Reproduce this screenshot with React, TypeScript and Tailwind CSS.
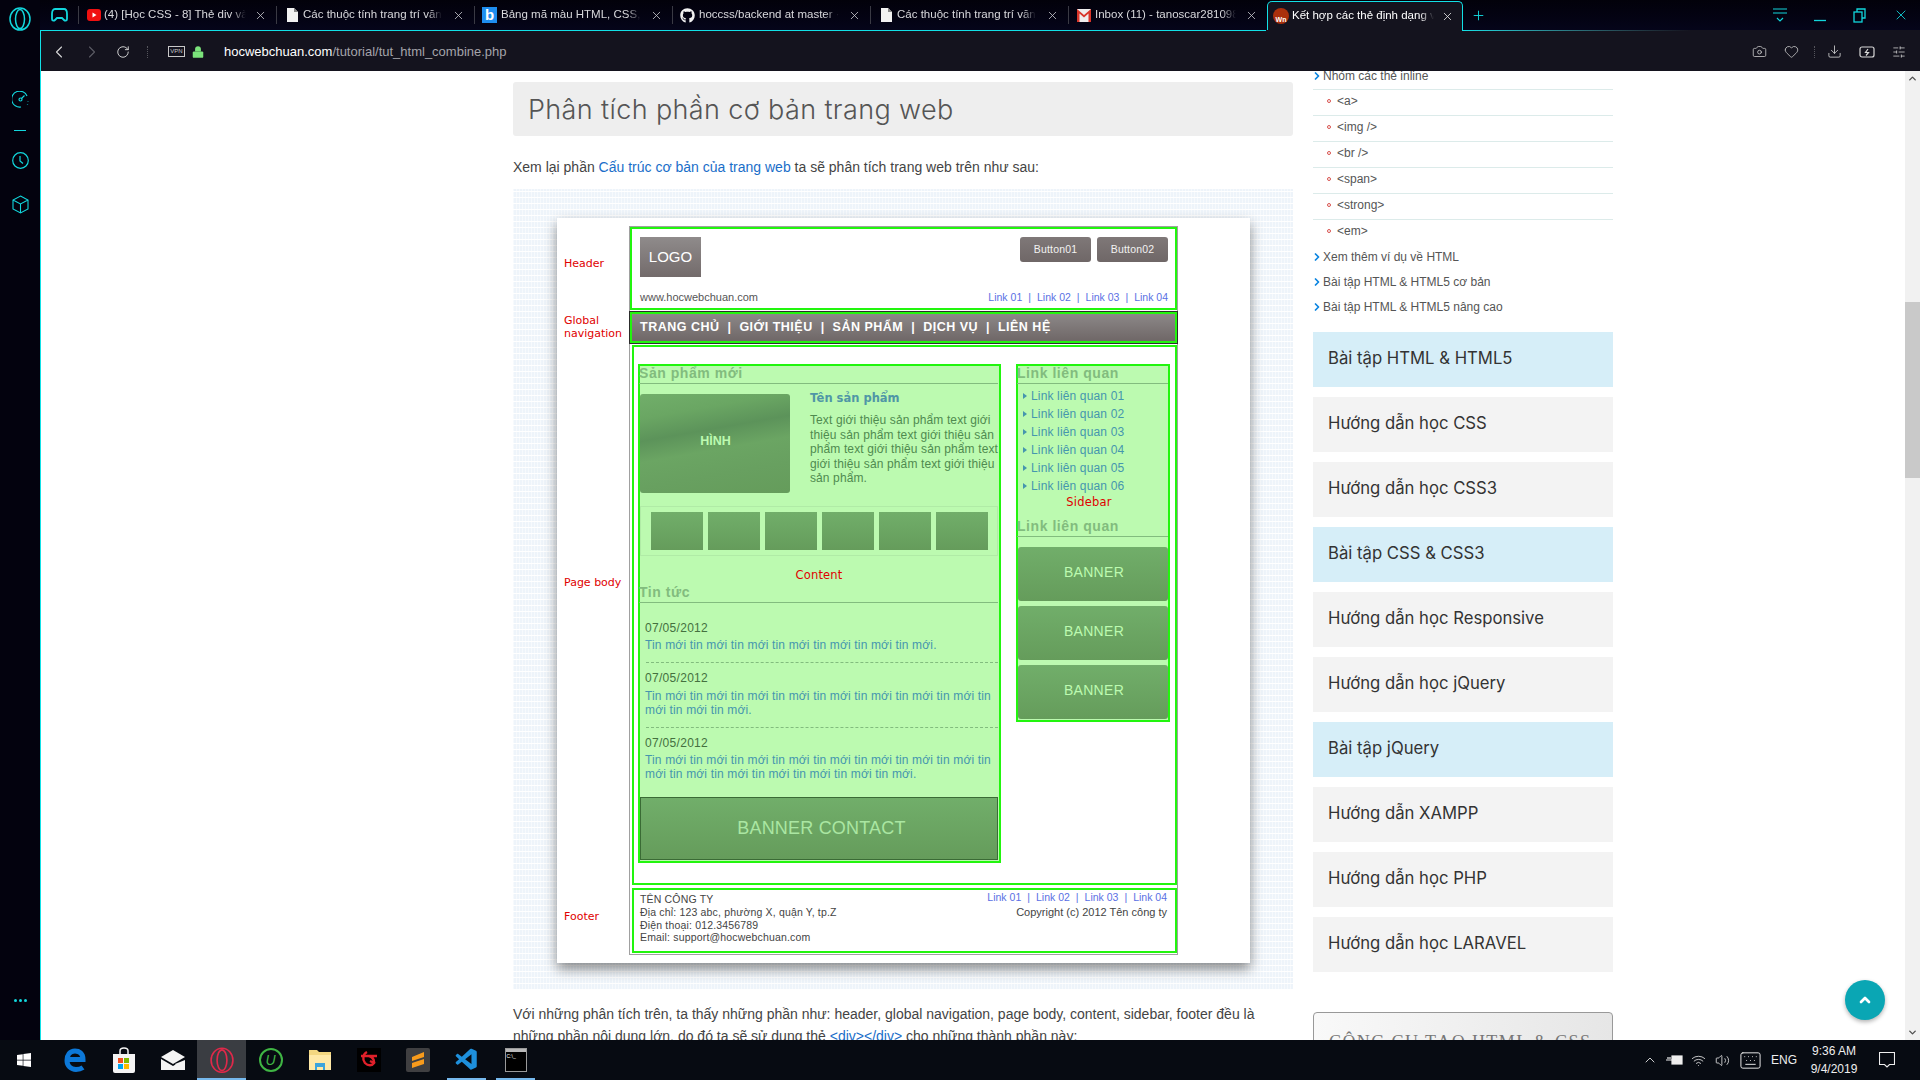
import React from "react";
import { FaGithub, FaWindows } from "react-icons/fa";
import { VscVscode } from "react-icons/vsc";
import { X, Plus, ChevronLeft, ChevronRight, RotateCw, Lock, Camera, Heart, Download, SlidersHorizontal, ChevronUp, ChevronDown, Volume2, Wifi, Keyboard, ChevronRight as Chev } from "lucide-react";

const arial = "font-['Liberation_Sans',Arial,sans-serif]";
const dv = "font-['DejaVu_Sans',Verdana,sans-serif]";

function OperaLogo({ size = 22, color = "#12d6dc" }: { size?: number; color?: string }) {
  return (
    <svg width={size} height={size * 1.1} viewBox="0 0 22 24" fill="none" stroke={color} strokeWidth="1.5">
      <ellipse cx="11" cy="12" rx="10" ry="11" />
      <ellipse cx="11" cy="12" rx="4.5" ry="9.5" />
    </svg>
  );
}

function DocIcon() {
  return (
    <svg width="11" height="14" viewBox="0 0 11 14" fill="#f2f2f2">
      <path d="M0 0h7l4 4v10H0z" />
      <path d="M7 0v4h4" fill="#888" />
    </svg>
  );
}

function YoutubeIcon() {
  return (
    <svg width="14" height="14" viewBox="0 0 14 14">
      <rect x="0" y="1" width="14" height="12" rx="3" fill="#f01010" />
      <path d="M5.5 4.5l4 2.5-4 2.5z" fill="#fff" />
    </svg>
  );
}

function BlueB() {
  return <div className={`w-[15px] h-[16px] bg-[#1e8ef0] text-white text-[15px] leading-[15px] font-bold text-center ${arial}`}>b</div>;
}

function GmailIcon() {
  return (
    <svg width="14" height="13" viewBox="0 0 14 13">
      <rect width="14" height="13" fill="#eee" />
      <path d="M0 0l7 6 7-6v13h-2.500V4.500L7 8.500 2.500 4.500V13H0z" fill="#d8352a" />
    </svg>
  );
}

function WIcon() {
  return (
    <div className="w-[16px] h-[16px] rounded-full bg-[#a9300c] flex items-end justify-center">
      <span className={`text-[7px] leading-[9px] font-bold text-white ${arial}`}>Wn</span>
    </div>
  );
}

const tabs = [
  { w: "w-[198px]", icon: <YoutubeIcon />, gap: "gap-[3px]", text: "(4) [Học CSS - 8] Thẻ div và thẻ span", pl: "pl-[8px]" },
  { w: "w-[198px]", icon: <DocIcon />, gap: "gap-[5px]", text: "Các thuộc tính trang trí văn bản", pl: "pl-[10px]" },
  { w: "w-[198px]", icon: <BlueB />, gap: "gap-[4px]", text: "Bảng mã màu HTML, CSS, RGB", pl: "pl-[7px]" },
  { w: "w-[198px]", icon: <FaGithub size={15} color="#f2f2f2" />, gap: "gap-[4px]", text: "hoccss/backend at master · hoccss", pl: "pl-[7px]" },
  { w: "w-[198px]", icon: <DocIcon />, gap: "gap-[5px]", text: "Các thuộc tính trang trí văn bản", pl: "pl-[10px]" },
  { w: "w-[199px]", icon: <GmailIcon />, gap: "gap-[4px]", text: "Inbox (11) - tanoscar281098@gmail", pl: "pl-[8px]" },
];

function Tab({ t }: { t: (typeof tabs)[number] }) {
  return (
    <div className={`${t.w} ${t.pl} ${t.gap} h-[18px] flex items-center border-l border-[#3a3a44] pr-[9px]`}>
      <span className="shrink-0 flex items-center">{t.icon}</span>
      <span className={`flex-1 min-w-0 overflow-hidden whitespace-nowrap text-[11.500px] text-[#d8d8dc] [mask-image:linear-gradient(to_right,black_90%,transparent)] ${arial}`}>{t.text}</span>
      <X size={13} strokeWidth={1.5} className="shrink-0 ml-[5px] text-[#c8c8cc]" />
    </div>
  );
}

function TabBar() {
  return (
    <div className="h-[30px] flex items-center bg-gradient-to-b from-[#02010a] to-[#05051a]">
      <div className="w-[38px] flex justify-center">
        <svg width="17" height="14" viewBox="0 0 17 14" fill="none" stroke="#12d6dc" strokeWidth="1.8">
          <path d="M4 1h9c2 0 3 2 3 5l0 5c0 2-2 2-3 1l-2-2H6l-2 2c-1 1-3 1-3-1l0-5c0-3 1-5 3-5z" />
        </svg>
      </div>
      {tabs.map((t, i) => (
        <Tab t={t} key={i} />
      ))}
      <div className="w-[196px] h-[30px] mt-[1px] flex items-center bg-[#14131e] border border-b-0 border-[#12e0e6] rounded-t-[5px] pl-[5px] pr-[8px] gap-[3px]">
        <WIcon />
        <span className={`flex-1 min-w-0 overflow-hidden whitespace-nowrap text-[11.500px] text-white [mask-image:linear-gradient(to_right,black_90%,transparent)] ${arial}`}>Kết hợp các thẻ định dạng và</span>
        <X size={13} strokeWidth={1.5} className="shrink-0 ml-[4px] text-[#e8e8e8]" />
      </div>
      <Plus size={15} strokeWidth={1.5} className="ml-[8px] text-[#12d6dc]" />
      <div className="flex-1" />
      <div className="flex items-center text-[#12d6dc] pr-[11px]">
        <svg width="16" height="16" viewBox="0 0 16 16" fill="none" stroke="currentColor" strokeWidth="1.2" className="mr-[25px]">
          <path d="M1 2h14M1 6h14M5 11l3 3 3-3" />
        </svg>
        <svg width="14" height="14" viewBox="0 0 14 14" fill="none" stroke="currentColor" strokeWidth="1.3" className="mr-[26px]">
          <path d="M1 12.500h12" />
        </svg>
        <svg width="14" height="15" viewBox="0 0 14 15" fill="none" stroke="currentColor" strokeWidth="1.3" className="mr-[26px]">
          <rect x="1" y="4" width="8" height="10" />
          <path d="M4 4V1h8v9H9" />
        </svg>
        <X size={16} strokeWidth={1.3} />
      </div>
    </div>
  );
}

function Toolbar() {
  return (
    <div className="h-[40px] bg-[#14131e] flex items-center shrink-0 pt-[1px]">
      <ChevronLeft size={20} strokeWidth={1.3} className="ml-[8px] text-[#d8d8d8]" />
      <ChevronRight size={20} strokeWidth={1.3} className="ml-[13px] text-[#5c5c64]" />
      <RotateCw size={14} strokeWidth={1.6} className="ml-[14px] text-[#d8d8d8]" />
      <div className="ml-[17px] w-px h-[12px] border-l border-dotted border-[#55555c]" />
      <div className={`ml-[20px] w-[17px] h-[11px] border border-[#c8c8c8] text-[6px] leading-[9px] text-center text-[#c8c8c8] ${arial}`}>VPN</div>
      <Lock size={14} strokeWidth={0} className="ml-[6px] text-[#7be37b] fill-[#7be37b]" />
      <div className={`ml-[19px] text-[13px] ${arial}`}>
        <span className="text-white">hocwebchuan.com</span>
        <span className="text-[#a4a4aa]">/tutorial/tut_html_combine.php</span>
      </div>
      <div className="flex-1" />
      <div className="flex items-center text-[#d8d8d8] pr-[14px]">
        <Camera size={15} strokeWidth={1.2} className="mr-[17px]" />
        <Heart size={15} strokeWidth={1.2} className="mr-[15px]" />
        <div className="w-px h-[12px] border-l border-dotted border-[#55555c] mr-[12px]" />
        <Download size={15} strokeWidth={1.3} className="mr-[17px]" />
        <svg width="16" height="12" viewBox="0 0 16 12" fill="none" stroke="currentColor" strokeWidth="1.2" className="mr-[17px]">
          <rect x="1" y="1" width="14" height="10" rx="2" />
          <path d="M9 3L6.500 6.500h3L7 9.500" />
        </svg>
        <SlidersHorizontal size={14} strokeWidth={1.3} />
      </div>
    </div>
  );
}

function LeftRail() {
  return (
    <div className="w-[40px] shrink-0 flex flex-col items-center text-[#12d6dc] bg-[#03020e]">
      <div className="mt-[7px]">
        <OperaLogo />
      </div>
      <svg width="17" height="17" viewBox="0 0 17 17" fill="none" stroke="currentColor" strokeWidth="1.2" className="mt-[60px]">
        <path d="M15 5A8 8 0 1 0 9 16" />
        <circle cx="8.500" cy="8.500" r="1.500" />
        <path d="M9.500 7.500L12.500 4.500M16 10v.5M15.500 13v.5" />
      </svg>
      <div className="w-[12px] h-px bg-current mt-[22px]" />
      <svg width="17" height="17" viewBox="0 0 17 17" fill="none" stroke="currentColor" strokeWidth="1.2" className="mt-[21px]">
        <circle cx="8.500" cy="8.500" r="7.800" />
        <path d="M8 4v5l3 2.500" />
      </svg>
      <svg width="17" height="19" viewBox="0 0 17 19" fill="none" stroke="currentColor" strokeWidth="1.1" className="mt-[26px]">
        <path d="M8.500 1L16 5v9l-7.500 4L1 14V5zM1 5l7.500 4L16 5M8.500 9v9" />
      </svg>
      <div className="flex-1" />
      <div className="flex gap-[2px] mb-[38px]">
        <i className="w-[3px] h-[3px] rounded-full bg-current" />
        <i className="w-[3px] h-[3px] rounded-full bg-current" />
        <i className="w-[3px] h-[3px] rounded-full bg-current" />
      </div>
    </div>
  );
}

function SectionTitle({ text }: { text: string }) {
  return (
    <div className={`h-[18px] -ml-px text-[14px] leading-[14px] font-bold text-[#82bc7e] tracking-[0.55px] border-b border-[#82bc7e] ${arial}`}>{text}</div>
  );
}

function HeaderLinks() {
  const items = ["Link 01", "Link 02", "Link 03", "Link 04"];
  return (
    <div className={`flex gap-[6px] text-[10.500px] leading-[13px] text-[#5a70e4] whitespace-nowrap ${arial}`}>
      {items.map((l, i) => (
        <React.Fragment key={l}>
          {i > 0 && <span>|</span>}
          <span>{l}</span>
        </React.Fragment>
      ))}
    </div>
  );
}

const greenBtn = "bg-gradient-to-b from-[#71ae6a] to-[#659c5b]";

function Thumbs() {
  return (
    <div className="mt-[13px] h-[50px] border border-[#b0eba6] flex items-center justify-center gap-[5px]">
      {[0, 1, 2, 3, 4, 5].map((i) => (
        <div key={i} className={`w-[52px] h-[38px] ${greenBtn}`} />
      ))}
    </div>
  );
}

function News({ lines, mt, linkMt }: { lines: string[]; mt: string; linkMt: string }) {
  return (
    <div className={`${mt} pl-[5px] ${arial}`}>
      <div className="text-[12px] leading-[15px] text-[#44703f] tracking-[0.3px]">07/05/2012</div>
      <div className={`${linkMt} text-[12px] leading-[14px] text-[#4596ae] tracking-[0.16px] whitespace-nowrap`}>
        {lines.map((l, i) => (
          <div key={i}>{l}</div>
        ))}
      </div>
    </div>
  );
}

function Wireframe() {
  return (
    <div className="mt-[12px] w-[780px] h-[801px] pt-[29px] pl-[44px] bg-[repeating-linear-gradient(90deg,#ffffff80_0px,#ffffff80_1px,transparent_1px,transparent_3px),repeating-linear-gradient(0deg,#ffffff_0px,#ffffff_1px,#eef4fa_1px,#eef4fa_6px)]">
      <div className="w-[693px] h-[745px] bg-white shadow-[0_6px_12px_rgba(0,0,0,0.45)] flex pt-[8px]">
        <div className={`w-[72px] shrink-0 pl-[7px] text-[11px] leading-[13.500px] text-[#e00000] ${dv}`}>
          <div className="mt-[31px]">Header</div>
          <div className="mt-[43px]">
            Global
            <br />
            navigation
          </div>
          <div className="mt-[235px]">Page body</div>
          <div className="mt-[321px]">Footer</div>
        </div>
        <div className="w-[549px] h-[729px] border border-[#a0a0a0] flex flex-col">
          {/* header */}
          <div className="h-[83px] border-2 border-[#22f50e] flex flex-col pl-[8px] pr-[7px] pt-[8px]">
            <div className="flex items-start justify-between">
              <div className={`w-[61px] h-[40px] bg-gradient-to-b from-[#8f8b8b] to-[#736b6b] flex items-center justify-center text-white text-[15px] ${arial}`}>LOGO</div>
              <div className={`flex gap-[6px] text-[10.500px] text-[#f2f2f2] tracking-[0.2px] ${arial}`}>
                <div className="w-[71px] h-[25px] rounded-[3px] bg-gradient-to-b from-[#7f7878] to-[#6f6767] flex items-center justify-center">Button01</div>
                <div className="w-[71px] h-[25px] rounded-[3px] bg-gradient-to-b from-[#7f7878] to-[#6f6767] flex items-center justify-center">Button02</div>
              </div>
            </div>
            <div className="mt-[14px] flex items-center justify-between">
              <div className={`text-[11px] leading-[13px] text-[#555] ${arial}`}>www.hocwebchuan.com</div>
              <HeaderLinks />
            </div>
          </div>
          {/* nav */}
          <div className="-mx-px h-[33px] mt-[1px] border border-[#2c2c2c]">
            <div className={`h-full border-2 border-[#22f50e] bg-gradient-to-b from-[#8c8888] to-[#6f6767] pl-[8px] flex items-center text-[12.500px] font-bold text-white tracking-[0.5px] whitespace-pre ${arial}`}>
              TRANG CHỦ  |  GIỚI THIỆU  |  SẢN PHẨM  |  DỊCH VỤ  |  LIÊN HỆ
            </div>
          </div>
          {/* body */}
          <div className="ml-[2px] h-[540px] mt-[1px] border-2 border-[#22f50e] pl-[4px] pt-[17px] flex items-start gap-[15px]">
            <div className="w-[363px] h-[499px] border-2 border-[#22f50e] bg-[#bcfab0] pr-[1px]">
              <SectionTitle text="Sản phẩm mới" />
              <div className="flex mt-[10px]">
                <div className="w-[150px] h-[99px] rounded-[3px] bg-[linear-gradient(170deg,#71ae6a_0%,#6aa663_20%,#5c935a_38%,#6ba563_55%,#68a060_75%,#659c5b_100%)] flex items-center justify-center pb-[5px] pl-[1px]">
                  <span className={`text-[12.500px] font-bold text-[#bcfab0] ${arial}`}>HÌNH</span>
                </div>
                <div className="ml-[20px]">
                  <div className={`text-[11.500px] leading-[9px] font-bold text-[#4f96a6] ${dv}`}>Tên sản phẩm</div>
                  <div className={`mt-[10px] text-[12px] leading-[14.500px] text-[#4f8a4f] tracking-[0.12px] whitespace-nowrap ${arial}`}>
                    Text giới thiệu sản phẩm text giới
                    <br />
                    thiệu sản phẩm text giới thiệu sản
                    <br />
                    phẩm text giới thiệu sản phẩm text
                    <br />
                    giới thiệu sản phẩm text giới thiệu
                    <br />
                    sản phẩm.
                  </div>
                </div>
              </div>
              <Thumbs />
              <div className={`mt-[12px] text-center text-[11.500px] leading-[14px] text-[#e00000] tracking-[0.2px] ${dv}`}>Content</div>
              <div className="mt-[3px]">
                <SectionTitle text="Tin tức" />
              </div>
              <News mt="mt-[18px]" linkMt="mt-[2px]" lines={["Tin mới tin mới tin mới tin mới tin mới tin mới tin mới."]} />
              <div className="ml-[6px] mt-[10px] border-t border-dashed border-[#82bc7e]" />
              <News mt="mt-[8px]" linkMt="mt-[3px]" lines={["Tin mới tin mới tin mới tin mới tin mới tin mới tin mới tin mới tin", "mới tin mới tin mới."]} />
              <div className="ml-[6px] mt-[10px] border-t border-dashed border-[#82bc7e]" />
              <News mt="mt-[8px]" linkMt="mt-[2px]" lines={["Tin mới tin mới tin mới tin mới tin mới tin mới tin mới tin mới tin", "mới tin mới tin mới tin mới tin mới tin mới tin mới."]} />
              <div className={`mt-[16px] h-[63px] border border-[#3a6b35] ${greenBtn} flex items-center justify-center pl-[5px] text-[18px] text-[#aae6a2] tracking-[0.2px] ${arial}`}>BANNER CONTACT</div>
            </div>
            <div className="w-[154px] h-[358px] border-2 border-[#22f50e] bg-[#bcfab0] flex flex-col">
              <SectionTitle text="Link liên quan" />
              <div className={`mt-[3px] ${arial}`}>
                {["01", "02", "03", "04", "05", "06"].map((n) => (
                  <div key={n} className="h-[18px] flex items-center pl-[5px] gap-[4px] text-[12px] text-[#4596ae] tracking-[0.15px]">
                    <span className="w-0 h-0 border-y-[3px] border-y-transparent border-l-[4px] border-l-[#4596ae]" />
                    Link liên quan {n}
                  </div>
                ))}
              </div>
              <div className={`text-center pr-[8px] text-[11.500px] leading-[14px] text-[#e00000] tracking-[0.2px] ${dv}`}>Sidebar</div>
              <div className="mt-[10px]">
                <SectionTitle text="Link liên quan" />
              </div>
              <div className={`mt-[10px] flex flex-col gap-[5px] text-[14px] text-[#bcfab0] tracking-[0.3px] ${arial}`}>
                {[0, 1, 2].map((i) => (
                  <div key={i} className={`h-[54px] rounded-[3px] ${greenBtn} flex items-center justify-center pl-[2px] pb-[3px]`}>BANNER</div>
                ))}
              </div>
            </div>
          </div>
          {/* footer */}
          <div className="ml-[2px] h-[65px] mt-[3px] border-2 border-[#22f50e] pl-[6px] pr-[8px] flex justify-between">
            <div className={`pt-[3px] text-[10.500px] leading-[12.800px] text-[#444] tracking-[0.17px] ${arial}`}>
              <div>TÊN CÔNG TY</div>
              <div>Địa chỉ: 123 abc, phường X, quận Y, tp.Z</div>
              <div>Điện thoại: 012.3456789</div>
              <div>Email: support@hocwebchuan.com</div>
            </div>
            <div className={`flex flex-col items-end pt-[1px] ${arial}`}>
              <HeaderLinks />
              <div className="mt-[1px] text-[11px] leading-[14px] text-[#444]">Copyright (c) 2012 Tên công ty</div>
            </div>
          </div>
        </div>
      </div>
    </div>
  );
}

const menuItems = ["<a>", "<img />", "<br />", "<span>", "<strong>", "<em>"];
const cards: [string, boolean][] = [
  ["Bài tập HTML & HTML5", true],
  ["Hướng dẫn học CSS", false],
  ["Hướng dẫn học CSS3", false],
  ["Bài tập CSS & CSS3", true],
  ["Hướng dẫn học Responsive", false],
  ["Hướng dẫn học jQuery", false],
  ["Bài tập jQuery", true],
  ["Hướng dẫn XAMPP", false],
  ["Hướng dẫn học PHP", false],
  ["Hướng dẫn học LARAVEL", false],
];

function MainLink({ text }: { text: string }) {
  return (
    <div className={`h-[25px] flex items-center text-[12px] text-[#555] ${arial}`}>
      <Chev size={12} strokeWidth={3.5} className="text-[#0a84e0] -ml-[2px] mr-[0px]" />
      {text}
    </div>
  );
}

function RightCol() {
  return (
    <div className="w-[300px] ml-[20px] -mt-[8px] shrink-0">
      <div className={`h-[27px] flex items-center text-[12px] text-[#555] border-b border-[#dcebea] ${arial}`}>
        <Chev size={12} strokeWidth={3.5} className="text-[#0a84e0] -ml-[2px] mr-[0px]" />
        Nhóm các thẻ inline
      </div>
      {menuItems.map((m, i) => (
        <div key={m} className={`h-[26px] pb-[4px] flex items-center pl-[14px] text-[12px] text-[#555] ${i < 5 ? "border-b border-[#dcebea]" : ""} ${arial}`}>
          <span className="w-[4px] h-[4px] rounded-full border border-[#d9534f] mr-[6px]" />
          {m}
        </div>
      ))}
      <div className="-mt-[2px]">
        <MainLink text="Xem thêm ví dụ về HTML" />
        <MainLink text="Bài tập HTML & HTML5 cơ bản" />
        <MainLink text="Bài tập HTML & HTML5 nâng cao" />
      </div>
      <div className="mt-[12.500px] flex flex-col gap-[10px]">
        {cards.map(([t, blue]) => (
          <div key={t} className={`h-[55px] flex items-center pl-[15px] text-[16.700px] text-[#333] font-['Inter',sans-serif] ${blue ? "bg-[#d6eef8]" : "bg-[#f3f3f3]"}`}>
            {t}
          </div>
        ))}
      </div>
      <div className="mt-[40px] h-[60px] border border-[#999] rounded-t-[4px] bg-gradient-to-r from-[#f9f9f9] to-[#e6e6e6] pt-[20px] pl-[15px] font-['Liberation_Serif',serif] text-[18px] leading-[18px] tracking-[1.4px] text-[#777]">CÔNG CỤ TẠO HTML &amp; CSS</div>
    </div>
  );
}

function Content() {
  return (
    <div className="flex-1 min-h-0 flex bg-white relative overflow-hidden">
      <div className="flex-1 min-w-0 flex items-start pl-[472px]">
        <div className="w-[780px] shrink-0 pt-[11px]">
          <div className="h-[54px] bg-[#eeeeee] rounded-[3px] flex items-center pl-[15px] pt-[3px] text-[27px] text-[#555] tracking-[0.38px] font-['Inter',sans-serif] font-light">Phân tích phần cơ bản trang web</div>
          <p className={`mt-[21px] text-[14px] leading-[20px] text-[#444] ${arial}`}>
            Xem lại phần <span className="text-[#1a6ec9]">Cấu trúc cơ bản của trang web</span> ta sẽ phân tích trang web trên như sau:
          </p>
          <Wireframe />
          <p className={`mt-[13px] text-[14px] leading-[22px] text-[#444] ${arial}`}>
            Với những phân tích trên, ta thấy những phần như: header, global navigation, page body, content, sidebar, footer đều là những phần nội dung lớn, do đó ta sẽ sử dụng thẻ <span className="text-[#1a6ec9] underline">&lt;div&gt;&lt;/div&gt;</span> cho những thành phần này:
          </p>
        </div>
        <RightCol />
      </div>
      <div className="w-[15px] shrink-0 bg-[#f1f1f1] flex flex-col items-center">
        <ChevronUp size={11} strokeWidth={3} className="mt-[2px] text-[#505050]" />
        <div className="w-full h-[176px] bg-[#c9c9c9] mt-[218px]" />
        <div className="flex-1" />
        <ChevronDown size={11} strokeWidth={3} className="mb-[2px] text-[#505050]" />
      </div>
      <div className="absolute left-[1804px] top-[909px] w-[40px] h-[40px] rounded-full bg-[#0aa6b4] shadow-[0_2px_4px_rgba(0,0,0,0.3)] flex items-center justify-center">
        <ChevronUp size={16} strokeWidth={4} className="text-white" />
      </div>
    </div>
  );
}

function TaskIcon({ children, active, run }: { children: React.ReactNode; active?: boolean; run?: boolean }) {
  return (
    <div className={`w-[49px] h-[40px] flex items-center justify-center relative ${active ? "bg-[#3a3d42]" : ""}`}>
      {children}
      {(active || run) && <div className={`absolute bottom-0 h-[2px] bg-[#76b9ed] ${active ? "inset-x-0" : "inset-x-[5px]"}`} />}
    </div>
  );
}

function Taskbar() {
  return (
    <div className="h-[40px] shrink-0 bg-[#070b12] flex items-center text-white">
      <div className="w-[50px] flex justify-center pr-[3px]">
        <FaWindows size={16} />
      </div>
      <TaskIcon>
        <svg width="22" height="24" viewBox="0 0 22 24" fill="none" stroke="#0c78d8" strokeWidth="5">
          <path d="M3 11.500h16C19 5 15 3 11 3 6 3 3 7 3 12.500 3 18 7 21.500 12 21.500c3 0 5-.6 7-2" />
        </svg>
      </TaskIcon>
      <TaskIcon>
        <svg width="24" height="26" viewBox="0 0 24 26">
          <path d="M1 7h22v17a2 2 0 0 1-2 2H3a2 2 0 0 1-2-2z" fill="#f4f4f4" />
          <path d="M8 8V4c0-4 8-4 8 0v4" fill="none" stroke="#f4f4f4" strokeWidth="1.5" />
          <rect x="6" y="11" width="5" height="5" fill="#f25022" />
          <rect x="12" y="11" width="5" height="5" fill="#7fba00" />
          <rect x="6" y="17" width="5" height="5" fill="#00a4ef" />
          <rect x="12" y="17" width="5" height="5" fill="#ffb900" />
        </svg>
      </TaskIcon>
      <TaskIcon>
        <svg width="24" height="20" viewBox="0 0 24 20">
          <path d="M0 7L12 0l12 7-12 7z" fill="#f4f4f4" />
          <path d="M0 9l12 7 5-3 2 5-5-4 10-4v10H0z" fill="#f4f4f4" />
        </svg>
      </TaskIcon>
      <TaskIcon active>
        <OperaLogo size={24} color="#e0294a" />
      </TaskIcon>
      <TaskIcon>
        <div className="w-[24px] h-[24px] rounded-full border-2 border-[#3fb544] flex items-center justify-center text-[#3fb544] text-[14px] italic leading-none font-['Liberation_Sans',sans-serif]">U</div>
      </TaskIcon>
      <TaskIcon>
        <svg width="22" height="22" viewBox="0 0 22 22">
          <path d="M0 1h8l2 2h12v18H0z" fill="#f3d780" />
          <path d="M0 6h22v15H0z" fill="#ffe9a6" />
          <path d="M6 14h10v7h-2v-3H8v3H6z" fill="#3da5dc" />
        </svg>
      </TaskIcon>
      <TaskIcon>
        <div className="w-[24px] h-[24px] bg-black flex items-center justify-center">
          <svg width="20" height="20" viewBox="0 0 20 20" fill="none" stroke="#e0202a" strokeWidth="2.4">
            <path d="M8 2c-4 2-5 7-2 11 3 3 7 3 9 0l-4-2M2 6h16M10 6c3 1 5 3 5 6" />
          </svg>
        </div>
      </TaskIcon>
      <TaskIcon>
        <div className="w-[24px] h-[24px] rounded-[2px] bg-[#3f3f41] flex items-center justify-center">
          <svg width="14" height="18" viewBox="0 0 14 18" fill="#f89b1c">
            <path d="M13 1v5L1 10V6zM1 17v-5l12-4v5z" />
          </svg>
        </div>
      </TaskIcon>
      <TaskIcon run>
        <VscVscode size={26} color="#1e90dc" />
      </TaskIcon>
      <TaskIcon run>
        <div className="w-[22px] h-[24px] border border-[#9a9a9a] bg-black">
          <div className="h-[3px] bg-[#b8b8b8]" />
          <div className={`text-[5px] leading-[8px] pl-[1px] text-white ${arial}`}>C:\_</div>
        </div>
      </TaskIcon>
      <div className="flex-1" />
      <div className={`flex items-center pr-[13px] text-[12px] text-[#eeeeee] ${arial}`}>
        <div className="w-[24px] flex justify-center">
          <ChevronUp size={16} strokeWidth={1.3} />
        </div>
        <div className="w-[24px] flex justify-center">
          <svg width="17" height="12" viewBox="0 0 17 12" fill="none" stroke="currentColor" strokeWidth="1.2">
            <rect x="6" y="2" width="10" height="8" fill="currentColor" />
            <path d="M0 6h6M2 3v2M4 3v2" />
          </svg>
        </div>
        <div className="w-[25px] flex justify-center">
          <Wifi size={15} strokeWidth={1.3} />
        </div>
        <div className="w-[22px] flex justify-center">
          <Volume2 size={15} strokeWidth={1.3} />
        </div>
        <div className="w-[34px] flex justify-center">
          <Keyboard size={23} strokeWidth={1} />
        </div>
        <div className="w-[34px] text-center">ENG</div>
        <div className="w-[66px] text-center leading-[18px]">
          <div>9:36 AM</div>
          <div>9/4/2019</div>
        </div>
        <div className="w-[40px] flex justify-center">
          <svg width="16" height="17" viewBox="0 0 16 17" fill="none" stroke="currentColor" strokeWidth="1.1">
            <path d="M.5.5h15v12h-5L8 15l-2.500-2.500h-5z" />
          </svg>
        </div>
      </div>
    </div>
  );
}

export default function App() {
  return (
    <div className="w-[1920px] h-screen flex flex-col overflow-hidden bg-[#03020e]">
      <div className="flex-1 min-h-0 flex">
        <LeftRail />
        <div className="flex-1 min-w-0 flex flex-col">
          <TabBar />
          <div className="flex-1 min-h-0 flex flex-col border-l border-[#12e0e6]">
            <div className="h-px shrink-0 flex">
              <div className="w-[1225px] bg-[#12e0e6]" />
              <div className="w-[196px] bg-[#14131e]" />
              <div className="flex-1 bg-gradient-to-r from-[#12e0e6] via-[#14131e] to-[#14131e]" />
            </div>
            <Toolbar />
            <Content />
          </div>
        </div>
      </div>
      <Taskbar />
    </div>
  );
}
